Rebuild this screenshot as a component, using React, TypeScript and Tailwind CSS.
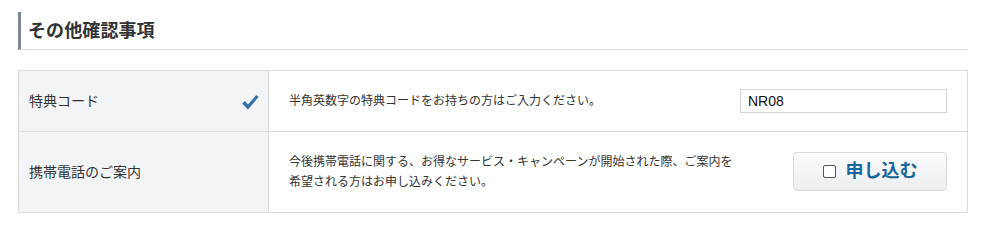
import React from "react";

export default function App() {
  const font = {
    fontFamily: '"Liberation Sans", "Noto Sans CJK JP", sans-serif',
  };
  return (
    <div className="bg-white w-[987px] h-[231px] pt-[12px] pl-[18px]" style={font}>
      <div className="w-[950px]">
        <div className="h-[38px] border-l-[3px] border-l-[#7c8894] border-b border-b-[#dadcdf] pl-[7px] flex items-center">
          <h2 className="text-[18px] leading-[36px] font-bold text-[#333] tracking-[0.1px]">その他確認事項</h2>
        </div>
        <div className="mt-[20px] border border-[#dcdcdc] grid grid-cols-[250px_1fr]">
          <div className="h-[60px] bg-[#f3f4f6] border-r border-[#dcdcdc] flex items-center justify-between pl-[10px] pr-[9px]">
            <span className="text-[14px] text-[#333]">特典コード</span>
            <svg width="18" height="17" viewBox="0 0 18 17" className="mt-[2px]">
              <path d="M1.2 9.6 L3.9 7.1 L7 10.6 L15.3 1 L17.6 3.1 L7 15.6 Z" fill="#3b6ea3" />
            </svg>
          </div>
          <div className="h-[60px] flex items-center justify-between pl-[20px] pr-[20px]">
            <span className="text-[12px] text-[#333]">半角英数字の特典コードをお持ちの方はご入力ください。</span>
            <input
              defaultValue="NR08"
              className="w-[207px] h-[24px] border border-[#d4d4d4] px-[7px] text-[14px] text-[#111] outline-none"
              style={font}
            />
          </div>
          <div className="h-[81px] bg-[#f3f4f6] border-r border-t border-[#dcdcdc] flex items-center pl-[10px]">
            <span className="text-[14px] text-[#333]">携帯電話のご案内</span>
          </div>
          <div className="h-[81px] border-t border-[#dcdcdc] flex items-center justify-between pl-[20px] pr-[20px]">
            <p className="text-[12px] leading-[20px] text-[#333]">
              今後携帯電話に関する、お得なサービス・キャンペーンが開始された際、ご案内を
              <br />
              希望される方はお申し込みください。
            </p>
            <button className="w-[154px] h-[39px] rounded-[4px] border border-[#d9dcdf] bg-gradient-to-b from-[#fbfbfc] to-[#eceef0] flex items-center justify-center gap-[10px] mb-[1px]">
              <span className="w-[13px] h-[13px] border border-[#555] rounded-[2px] bg-white" />
              <span className="text-[18px] font-bold text-[#19679a]" style={font}>申し込む</span>
            </button>
          </div>
        </div>
      </div>
    </div>
  );
}
